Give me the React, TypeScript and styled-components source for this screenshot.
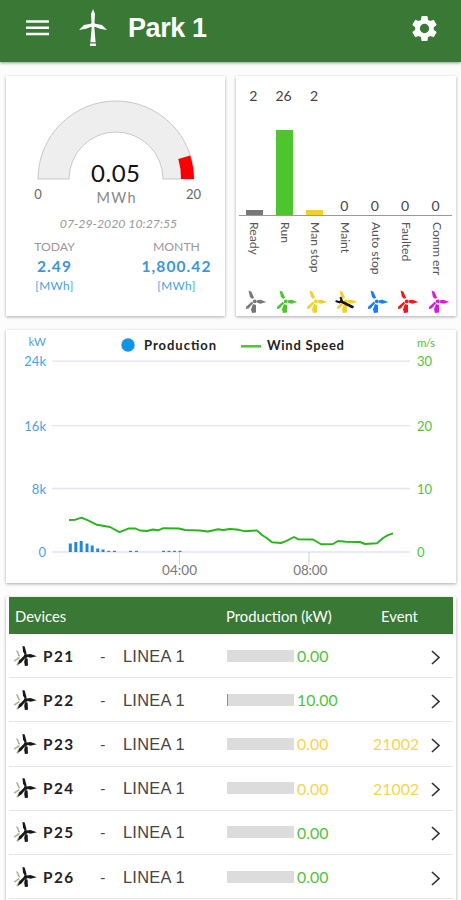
import React from "react";
import styled, { createGlobalStyle } from "styled-components";

const GlobalStyle = createGlobalStyle`
  *, *::before, *::after { box-sizing: border-box; }
  html, body { margin: 0; padding: 0; }
  body {
    background: #fcfcfc;
    font-family: Lato, "Open Sans", sans-serif;
    color: #222;
    overflow: hidden;
  }
  svg text { font-family: Lato, "Open Sans", sans-serif; }
`;

const Page = styled.div`
  width: 461px;
  height: 900px;
  overflow: hidden;
  display: flex;
  flex-direction: column;
`;

const Header = styled.header`
  height: 62px;
  flex: none;
  display: flex;
  align-items: center;
  padding: 0 21px 6px 25px;
  background: #397835;
  color: #fff;
  box-shadow: 0 1px 3px rgba(0, 0, 0, 0.4);
`;

const HeaderTurbine = styled.svg`
  margin-left: 29px;
  flex: none;
`;

const Title = styled.h1`
  flex: 1;
  margin: 0 0 0 20px;
  font: bold 27px/32px "Liberation Sans", Arial, sans-serif;
  letter-spacing: -0.4px;
`;

const Content = styled.main`
  padding: 14px 5px 0 6px;
  display: flex;
  flex-direction: column;
  gap: 14px;
`;

const Summary = styled.div`
  display: grid;
  grid-template-columns: 219px 220px;
  column-gap: 11px;
  height: 240px;
`;

const Card = styled.section`
  background: #fff;
  box-shadow: 0 1px 3px rgba(0, 0, 0, 0.32);
  min-width: 0;
`;

const Drawing = styled.svg`
  display: block;
`;

const Timestamp = styled.div`
  height: 19px;
  padding-left: 6px;
  text-align: center;
  font-size: 12.3px;
  line-height: 18px;
  font-style: italic;
  color: #999;
`;

const Totals = styled.div`
  display: grid;
  grid-template-columns: 97px 1fr;
  padding-top: 4px;
`;

const Total = styled.div<{ $shift: number }>`
  display: flex;
  flex-direction: column;
  align-items: center;
  padding-left: ${(p) => p.$shift}px;
`;

const TotalLabel = styled.span`
  font-size: 12.2px;
  line-height: 17px;
  color: #999;
`;

const TotalValue = styled.span`
  font-size: 15.5px;
  line-height: 22px;
  font-weight: 700;
  letter-spacing: 1.1px;
  color: #3a96e0;
`;

const TotalUnit = styled.span`
  font-size: 11.8px;
  line-height: 17px;
  letter-spacing: 0.4px;
  color: #4a9fe3;
`;

const StatusCard = styled(Card)`
  padding: 11px 5px 0 3px;
`;

const StatusGrid = styled.div`
  display: grid;
  grid-template-columns: repeat(7, 30.4px);
`;

const StatusColumn = styled.div`
  display: flex;
  flex-direction: column;
  align-items: center;
`;

const StatusPlot = styled.div<{ $empty: boolean }>`
  width: 100%;
  height: 129px;
  display: flex;
  flex-direction: column;
  align-items: center;
  justify-content: ${(p) => (p.$empty ? "flex-end" : "space-between")};
  border-bottom: 1px solid #999;
`;

const StatusCount = styled.span`
  margin-left: -2px;
  font-size: 14px;
  line-height: 18px;
  color: #444;
`;

const StatusBar = styled.div<{ $height: number; $color: string }>`
  width: 17px;
  height: ${(p) => p.$height}px;
  background: ${(p) => p.$color};
`;

const StatusLabel = styled.span`
  height: 73px;
  padding-top: 6px;
  writing-mode: vertical-rl;
  font-size: 12.2px;
  line-height: 16px;
  white-space: nowrap;
  color: #555;
`;

const StatusGlyph = styled.svg`
  margin-left: 4px;
`;

const TrendCard = styled(Card)`
  height: 253px;
`;

const TableCard = styled(Card)`
  height: 330px;
  padding: 0 3px;
`;

const columns = "28px 55px 25px 107px 68px 76px 55px 1fr";

const TableHead = styled.div`
  display: grid;
  grid-template-columns: 211px 155px 1fr;
  align-items: center;
  height: 37px;
  padding-left: 6px;
  background: #397835;
  color: #fff;
  font-size: 14.8px;
  line-height: 20px;
`;

const HeadCell = styled.span`
  white-space: nowrap;
`;

const DeviceRow = styled.div`
  display: grid;
  grid-template-columns: ${columns};
  align-items: center;
  height: 44.2px;
  padding-left: 3px;
  border-bottom: 1px solid #e4e4e4;
`;

const DeviceName = styled.span`
  padding-left: 3px;
  font-size: 15.3px;
  font-weight: 700;
  letter-spacing: 1.5px;
  color: #222;
`;

const Dash = styled.span`
  padding-left: 5px;
  font-size: 15px;
  color: #444;
`;

const Line = styled.span`
  padding-left: 3px;
  font: 16.4px/20px "Liberation Sans", Arial, sans-serif;
  letter-spacing: 0.25px;
  color: #444;
`;

const Meter = styled.div`
  width: 67px;
  height: 12px;
  background: #dcdcdc;
`;

const MeterFill = styled.div<{ $percent: number }>`
  width: ${(p) => p.$percent}%;
  height: 100%;
  background: #54b948;
`;

const Reading = styled.span<{ $tone: string }>`
  padding-left: 2px;
  font-size: 15.8px;
  letter-spacing: 0.1px;
  color: ${(p) => p.$tone};
`;

const green = "#4fc33a";
const yellow = "#f8d34f";
const blue = "#4d9fe4";

function MenuIcon() {
  return (
    <svg width="24" height="18" viewBox="0 0 24 18">
      <path d="M1 2.5H24M1 8.7H24M1 15H24" stroke="#fff" strokeWidth="2.6" />
    </svg>
  );
}

function TurbineLogo() {
  return (
    <HeaderTurbine width="30" height="38" viewBox="0 0 30 38">
      <g fill="#fff">
        <path d="M15 0L17 5L16.3 16H13.7L13 5Z" />
        <path d="M14 14.5L6 16L1 21L8 19.8L14 17.4Z" />
        <path d="M16 14.5L24 16L29 21L22 19.8L16 17.4Z" />
        <circle cx="15" cy="16" r="2.3" />
        <path d="M13.7 18H16.3L17.6 33.3H12.4ZM12.1 34.5H17.9V37H12.1Z" />
      </g>
    </HeaderTurbine>
  );
}

function GearIcon() {
  return (
    <svg width="31" height="31" viewBox="0 0 24 24" fill="#fff">
      <path d="M19.14 12.94c.04-.3.06-.61.06-.94s-.02-.64-.07-.94l2.03-1.58a.49.49 0 0 0 .12-.61l-1.92-3.32a.488.488 0 0 0-.59-.22l-2.39.96c-.5-.38-1.03-.7-1.62-.94l-.36-2.54a.484.484 0 0 0-.48-.41h-3.84c-.24 0-.43.17-.47.41l-.36 2.54c-.59.24-1.13.57-1.62.94l-2.39-.96c-.22-.08-.47 0-.59.22L2.74 8.87c-.12.21-.08.47.12.61l2.03 1.58c-.05.3-.09.63-.09.94s.02.64.07.94l-2.03 1.58a.49.49 0 0 0-.12.61l1.92 3.32c.12.22.37.29.59.22l2.39-.96c.5.38 1.03.7 1.62.94l.36 2.54c.05.24.24.41.48.41h3.84c.24 0 .44-.17.47-.41l.36-2.54c.59-.24 1.13-.56 1.62-.94l2.39.96c.22.08.47 0 .59-.22l1.92-3.32c.12-.22.07-.47-.12-.61l-2.01-1.58zM12 15.6a3.6 3.6 0 1 1 0-7.2 3.6 3.6 0 0 1 0 7.2z" />
    </svg>
  );
}

function StatusIcon({ color, wrench }: { color: string; wrench?: boolean }) {
  return (
    <StatusGlyph width="24" height="26" viewBox="2 0 22 26" preserveAspectRatio="none">
      <g fill={color}>
        <path d="M6.2 1.5L8.8 2.7L11.3 9L9.2 9.8L7.4 7.8Z" />
        <path d="M14 11.3L17 10.7L22.5 13L17 14.8L14 13.8Z" />
        <path d="M10.2 15L13 16V23.5L9.4 24L8.4 20.5Z" />
        <path d="M9.4 12.4L10.3 14.2L6.2 19.4L3.6 20L4.2 17.4Z" />
        <circle cx="11.9" cy="12.4" r="1.8" />
      </g>
      {wrench && (
        <g fill="none" stroke="#151515" strokeLinecap="round">
          <path d="M3.3 12.3L6.2 13.3L8.2 11.2L7.2 8.8" strokeWidth="2" />
          <path d="M8 12.7L18 18" strokeWidth="2.6" />
        </g>
      )}
    </StatusGlyph>
  );
}

function DeviceIcon() {
  return (
    <svg width="26" height="24" viewBox="0 0 26 24">
      <g fill="#a9b391">
        <path d="M3.8 6L6 7L8.2 12.2L6.7 12.6Z" />
        <path d="M6.5 13L8 14L3 17.5L1.5 16.8Z" />
        <path d="M7.6 15L8.6 17L6.5 21.5L4.2 21Z" />
      </g>
      <g fill="#181818">
        <path d="M10.5 2L12.7 2.5L14.6 9.5L12.8 10.7L11 7.5Z" />
        <path d="M15 10.6L18.5 10L24.8 12.3L18.5 13.8L15 12.8Z" />
        <path d="M12.9 14L15.6 14.5L16 21.7L12.9 22L12.2 18Z" />
        <path d="M12.2 11.6L13.2 13.9L9.2 18.8L5.8 20.4L7.5 16.2Z" />
        <circle cx="13.8" cy="12" r="2" />
      </g>
    </svg>
  );
}

function Gauge() {
  return (
    <Drawing width="219" height="139" viewBox="6 76 219 139">
      <path d="M38 179A78 78 0 0 1 194 179H163A47 47 0 0 0 69 179Z" fill="#eee" stroke="#c8c8c8" />
      <path d="M194 179A78 78 0 0 0 190.2 155.5L178.3 159A65 65 0 0 1 181 179Z" fill="#fa0000" />
      <g textAnchor="middle">
        <text x="115.5" y="181.5" fontSize="24" fill="#111" textLength="49">0.05</text>
        <text x="116" y="203" fontSize="14.5" fill="#888" textLength="39">MWh</text>
        <text x="38" y="199" fontSize="13" fill="#666">0</text>
        <text x="193.5" y="199" fontSize="13" fill="#666" textLength="15">20</text>
      </g>
    </Drawing>
  );
}

const statuses = [
  { label: "Ready", count: 2, bar: 5, color: "#777777" },
  { label: "Run", count: 26, bar: 85, color: "#4ec42f" },
  { label: "Man stop", count: 2, bar: 5, color: "#f3d028" },
  { label: "Maint", count: 0, bar: 0, color: "#f3d028", wrench: true },
  { label: "Auto stop", count: 0, bar: 0, color: "#157ef0" },
  { label: "Faulted", count: 0, bar: 0, color: "#ef1717" },
  { label: "Comm err", count: 0, bar: 0, color: "#d41ae0" },
];

const gridLines = [
  { y: 361.2, left: "24k", right: "30" },
  { y: 425.7, left: "16k", right: "20" },
  { y: 488.5, left: "8k", right: "10" },
  { y: 552, left: "0", right: "0" },
];

const productionBars = [
  [70.3, 8.5], [75.8, 10], [81.2, 11], [87, 8.5], [92.2, 6.5], [97.7, 3.5],
  [103, 2.5], [108.7, 1.2], [114.5, 1.2], [130.5, 1.2], [136.5, 1.2],
  [163.5, 1.2], [169, 1.2], [174.5, 1.2], [180, 1.2],
];

const windSpeed =
  "M69 520L75.5 519.7L81.5 517.6L88 520.3L97 524.8L110 527L119.5 532.2L129 528.4L135.5 528.5L140 530.5L147 531L153 529.5L158 530.3L163.5 528.2L179 528.5L185 530L200 530.5L208 531.5L218 529.2L223 530L230 529L239 529.8L244 531.2L257 530.5L262 535L267 538.3L272 542.3L281 543L286 541.2L294 537L298 539.2L313 539.5L321 544.2L333 544L338 541L346 541.8L360 542L365 544L377 543.2L383 538L388 535.2L393 533.3";

function TrendChart() {
  return (
    <Drawing width="450" height="253" viewBox="6 330 450 253">
      <g stroke="#e2e4ef">
        {gridLines.map((g) => (
          <path key={g.y} d={`M52 ${g.y}H410`} strokeWidth="1.3" />
        ))}
        <path d="M179.5 552V565M309 552V565" stroke="#ccd1e2" />
      </g>
      {productionBars.map(([x, h]) => (
        <rect key={x} x={x - 1.5} y={552 - h} width="3" height={h} fill="#2388dc" />
      ))}
      <path d={windSpeed} fill="none" stroke="#27b51b" strokeWidth="1.9" strokeLinejoin="round" />
      <g fontSize="13" fill={blue} textAnchor="end">
        <text x="46" y="346" fontSize="11.5">kW</text>
        {gridLines.map((g) => (
          <text key={g.y} x="46" y={g.y + 5}>{g.left}</text>
        ))}
      </g>
      <g fontSize="13" fill={green}>
        <text x="417" y="347" fontSize="11.5" textLength="18">m/s</text>
        {gridLines.map((g) => (
          <text key={g.y} x="417" y={g.y + 5}>{g.right}</text>
        ))}
      </g>
      <g fontSize="13" fontWeight="700" fill="#222">
        <circle cx="128" cy="345" r="6.7" fill="#1494e4" />
        <text x="144" y="350" textLength="72">Production</text>
        <path d="M241 346.3H261" stroke="#54c441" strokeWidth="2.6" />
        <text x="267" y="350" textLength="77">Wind Speed</text>
      </g>
      <g fontSize="13.5" fill="#777" textAnchor="middle">
        <text x="179.5" y="575" textLength="35">04:00</text>
        <text x="310.3" y="575" textLength="34">08:00</text>
      </g>
    </Drawing>
  );
}

const devices = [
  { name: "P21", value: "0.00", fill: 0, tone: green, event: "" },
  { name: "P22", value: "10.00", fill: 2, tone: green, event: "" },
  { name: "P23", value: "0.00", fill: 0, tone: yellow, event: "21002" },
  { name: "P24", value: "0.00", fill: 0, tone: yellow, event: "21002" },
  { name: "P25", value: "0.00", fill: 0, tone: green, event: "" },
  { name: "P26", value: "0.00", fill: 0, tone: green, event: "" },
];

export default function App() {
  return (
    <>
      <GlobalStyle />
      <Page>
        <Header>
          <MenuIcon />
          <TurbineLogo />
          <Title>Park 1</Title>
          <GearIcon />
        </Header>
        <Content>
          <Summary>
            <Card>
              <Gauge />
              <Timestamp>07-29-2020 10:27:55</Timestamp>
              <Totals>
                <Total $shift={0}>
                  <TotalLabel>TODAY</TotalLabel>
                  <TotalValue>2.49</TotalValue>
                  <TotalUnit>[MWh]</TotalUnit>
                </Total>
                <Total $shift={25}>
                  <TotalLabel>MONTH</TotalLabel>
                  <TotalValue>1,800.42</TotalValue>
                  <TotalUnit>[MWh]</TotalUnit>
                </Total>
              </Totals>
            </Card>
            <StatusCard>
              <StatusGrid>
                {statuses.map((s) => (
                  <StatusColumn key={s.label}>
                    <StatusPlot $empty={s.count === 0}>
                      <StatusCount>{s.count}</StatusCount>
                      {s.bar > 0 && <StatusBar $height={s.bar} $color={s.color} />}
                    </StatusPlot>
                    <StatusLabel>{s.label}</StatusLabel>
                    <StatusIcon color={s.color} wrench={s.wrench} />
                  </StatusColumn>
                ))}
              </StatusGrid>
            </StatusCard>
          </Summary>
          <TrendCard>
            <TrendChart />
          </TrendCard>
          <TableCard>
            <TableHead>
              <HeadCell>Devices</HeadCell>
              <HeadCell>Production (kW)</HeadCell>
              <HeadCell>Event</HeadCell>
            </TableHead>
            {devices.map((d) => (
              <DeviceRow key={d.name}>
                <DeviceIcon />
                <DeviceName>{d.name}</DeviceName>
                <Dash>-</Dash>
                <Line>LINEA 1</Line>
                <Meter>
                  <MeterFill $percent={d.fill} />
                </Meter>
                <Reading $tone={d.tone}>{d.value}</Reading>
                <Reading $tone={d.tone}>{d.event}</Reading>
                <svg width="16" height="20" viewBox="0 0 16 20">
                  <path d="M6 5L13 11.5L6 18" fill="none" stroke="#333" strokeWidth="1.7" />
                </svg>
              </DeviceRow>
            ))}
          </TableCard>
        </Content>
      </Page>
    </>
  );
}
